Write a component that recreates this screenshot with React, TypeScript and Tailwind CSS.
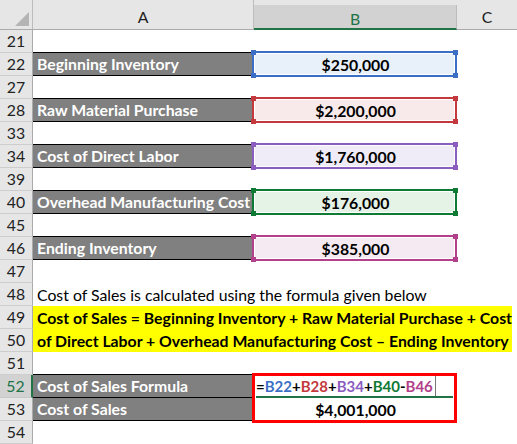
import React from 'react';

type Tone = 'blue' | 'red' | 'purple' | 'green' | 'pink';

const tones: Record<Tone, { line: string; dot: string; fill: string }> = {
  blue: { line: 'border-[#3b6fc6]', dot: 'bg-[#3b6fc6]', fill: 'bg-[#e8f0fa]' },
  red: { line: 'border-[#c3393d]', dot: 'bg-[#c3393d]', fill: 'bg-[#f8eaea]' },
  purple: { line: 'border-[#8a5dbf]', dot: 'bg-[#8a5dbf]', fill: 'bg-[#f0ecf7]' },
  green: { line: 'border-[#0f7a34]', dot: 'bg-[#0f7a34]', fill: 'bg-[#e5f2e6]' },
  pink: { line: 'border-[#b3408a]', dot: 'bg-[#b3408a]', fill: 'bg-[#f5eaf1]' },
};

interface Row {
  n: number;
  label?: string;
  value?: string;
  tone?: Tone;
  edge?: boolean; // black line under column A
}

const rows: Row[] = [
  { n: 21, edge: true },
  { n: 22, label: 'Beginning Inventory', value: '$250,000', tone: 'blue', edge: true },
  { n: 27, edge: true },
  { n: 28, label: 'Raw Material Purchase', value: '$2,200,000', tone: 'red', edge: true },
  { n: 33, edge: true },
  { n: 34, label: 'Cost of Direct Labor', value: '$1,760,000', tone: 'purple', edge: true },
  { n: 39, edge: true },
  { n: 40, label: 'Overhead Manufacturing Cost', value: '$176,000', tone: 'green', edge: true },
  { n: 45, edge: true },
  { n: 46, label: 'Ending Inventory', value: '$385,000', tone: 'pink', edge: true },
  { n: 47 },
];

function RowHead({ n, active }: { n: number; active?: boolean }) {
  return (
    <div
      className={
        active
          ? 'w-[33px] h-full shrink-0 flex items-center justify-center bg-[#d2d2d2] text-[#217346] border-b border-[#c8c8c8] border-r-2 border-r-[#217346]'
          : 'w-[33px] h-full shrink-0 flex items-center justify-center bg-[#e6e6e6] text-[#222] border-b border-[#cdcdcd] border-r border-r-[#ababab]'
      }
    >
      {n}
    </div>
  );
}

function RefBox({ tone }: { tone: Tone }) {
  const t = tones[tone];
  return (
    <div className={`absolute -top-[2px] -bottom-px -left-[2px] right-0 border-2 ${t.line}`}>
      <div className={`h-full w-full border border-white ${t.fill}`} />
      <span className={`absolute -top-[3px] -left-[3px] w-[5px] h-[5px] ${t.dot}`} />
      <span className={`absolute -top-[3px] -right-[3px] w-[5px] h-[5px] ${t.dot}`} />
      <span className={`absolute -bottom-[3px] -left-[3px] w-[5px] h-[5px] ${t.dot}`} />
      <span className={`absolute -bottom-[3px] -right-[3px] w-[5px] h-[5px] ${t.dot}`} />
    </div>
  );
}

function DataRow({ row }: { row: Row }) {
  return (
    <div className="flex h-[23px]">
      <RowHead n={row.n} />
      <div
        className={`w-[221px] shrink-0 flex items-center pl-[4px] font-bold text-white whitespace-nowrap ${row.label ? 'bg-[#808080]' : 'bg-white'} ${row.edge ? 'border-b border-black' : ''}`}
      >
        {row.label}
      </div>
      <div className="relative w-[203px] shrink-0 flex items-center justify-center font-bold text-black">
        {row.tone && <RefBox tone={row.tone} />}
        {row.value && <span className="relative">{row.value}</span>}
      </div>
      <div className="flex-1" />
    </div>
  );
}

export default function App() {
  return (
    <div className="w-[517px] h-[444px] overflow-hidden bg-white text-[15.8px] leading-none font-[Lato,'Liberation_Sans',sans-serif] text-black">
      {/* column headers */}
      <div className="flex h-[30px] bg-[#e6e6e6] border-b border-[#ababab]">
        <div className="w-[33px] shrink-0 flex items-end justify-end pr-[3px] pb-[3px] border-r border-[#bcbcbc]">
          <svg width="14" height="14" viewBox="0 0 14 14">
            <polygon points="14,0 14,14 0,14" fill="#b4b4b4" />
          </svg>
        </div>
        <div className="w-[221px] shrink-0 flex items-center justify-center pt-[4px] border-r border-[#bcbcbc] text-[#222]">
          A
        </div>
        <div className="w-[203px] shrink-0 flex items-center justify-center pt-[4px] bg-[#d2d2d2] text-[#217346] border-r border-[#bcbcbc] border-b-2 border-b-[#217346] mt-[5px] -mb-px">
          B
        </div>
        <div className="flex-1 flex items-center justify-center pt-[4px] text-[#222]">C</div>
      </div>

      {rows.map((r) => (
        <DataRow key={r.n} row={r} />
      ))}

      {/* row 48 */}
      <div className="flex h-[23px]">
        <RowHead n={48} />
        <div className="flex-1 flex items-center pl-[4px] whitespace-nowrap">
          Cost of Sales is calculated using the formula given below
        </div>
      </div>

      {/* rows 49-50 highlighted formula text */}
      <div className="flex h-[46px]">
        <div className="flex flex-col shrink-0">
          <div className="h-[23px]"><RowHead n={49} /></div>
          <div className="h-[23px]"><RowHead n={50} /></div>
        </div>
        <div className="w-[479px] shrink-0 flex flex-col bg-[#ffff00] font-bold whitespace-nowrap pl-[4px]">
          <div className="h-[23px] flex items-center">
            Cost of Sales = Beginning Inventory + Raw Material Purchase + Cost
          </div>
          <div className="h-[23px] flex items-center">
            of Direct Labor + Overhead Manufacturing Cost – Ending Inventory
          </div>
        </div>
      </div>

      {/* row 51 */}
      <div className="flex h-[23px]">
        <RowHead n={51} />
        <div className="w-[221px] shrink-0 border-b border-black" />
      </div>

      {/* row 52 - formula being edited */}
      <div className="flex h-[23px]">
        <RowHead n={52} active />
        <div className="w-[221px] shrink-0 flex items-center pl-[4px] font-bold text-white bg-[#808080] border-b border-black">
          Cost of Sales Formula
        </div>
        <div className="relative w-[203px] shrink-0 flex items-center pl-[2px] font-bold text-[15px]">
          <span>=</span>
          <span className="text-[#3b6fc6]">B22</span>
          <span>+</span>
          <span className="text-[#c3393d]">B28</span>
          <span>+</span>
          <span className="text-[#8a5dbf]">B34</span>
          <span>+</span>
          <span className="text-[#0f7a34]">B40</span>
          <span>-</span>
          <span className="text-[#b3408a]">B46</span>
          <span className="ml-[2px] w-px h-full bg-[#777]" />
          <span className="absolute bottom-0 left-[2px] right-[3px] h-[2px] bg-[#217346]" />
          <span className="absolute -bottom-[2px] -right-[1px] w-[5px] h-[5px] bg-[#217346] border border-white" />
          <span className="absolute -top-[2px] -left-[2px] w-[205px] h-[50px] border-[3px] border-[#ff0000]" />
        </div>
      </div>

      {/* row 53 */}
      <div className="flex h-[23px]">
        <RowHead n={53} />
        <div className="w-[221px] shrink-0 flex items-center pl-[4px] font-bold text-white bg-[#808080] border-b border-black">
          Cost of Sales
        </div>
        <div className="w-[203px] shrink-0 flex items-center justify-center font-bold">$4,001,000</div>
      </div>

      {/* row 54 */}
      <div className="flex h-[23px]">
        <RowHead n={54} />
      </div>
    </div>
  );
}
